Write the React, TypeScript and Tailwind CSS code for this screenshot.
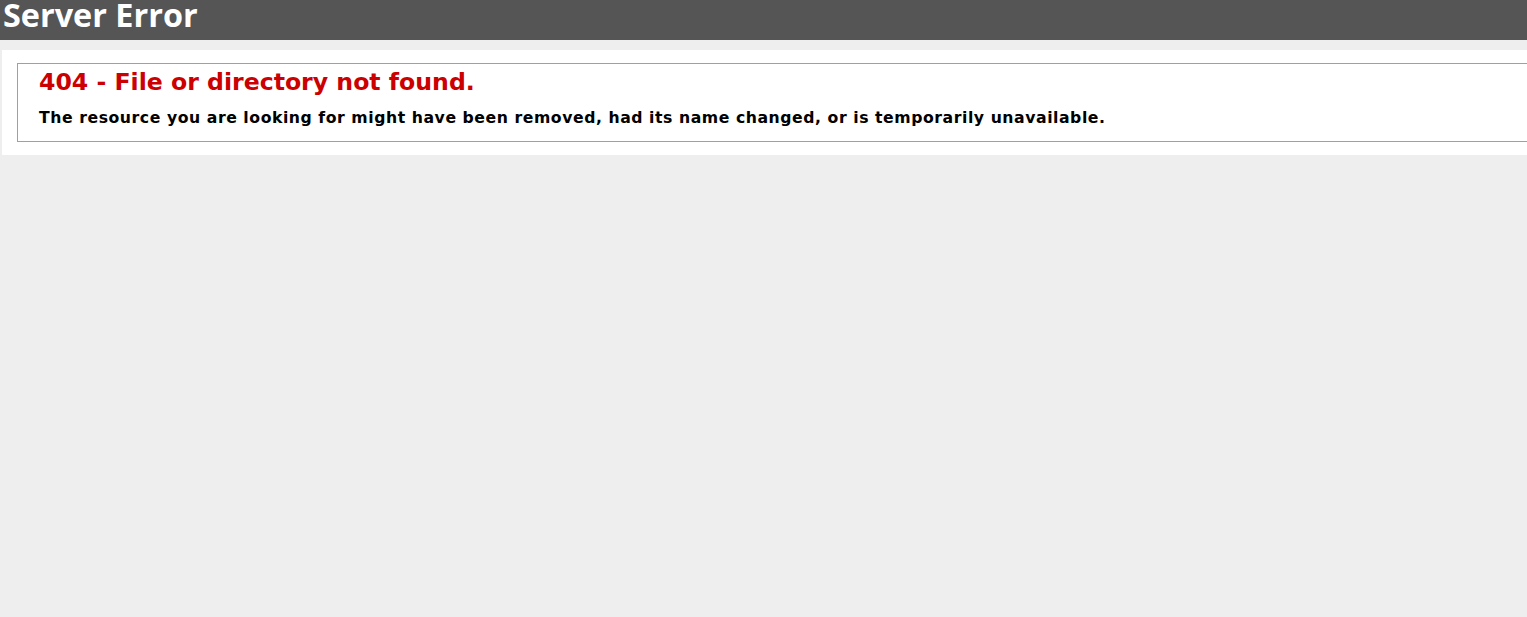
export default function App() {
  return (
    <div className="min-h-screen w-full overflow-hidden bg-[#eeeeee] font-['DejaVu_Sans',Verdana,sans-serif]">
      {/* Header bar */}
      <div className="h-[40px] overflow-hidden bg-[#555555] pl-[3px]">
        <h1 className="-mt-[6px] whitespace-nowrap font-['Open_Sans',sans-serif] text-[32.4px] font-bold leading-[40px] text-white">
          Server Error
        </h1>
      </div>

      {/* Content */}
      <div className="mt-[10px] ml-[2px] w-[1560px] bg-white px-[15px] py-[13px]">
        <fieldset className="border border-[#a0a0a0] px-[21px] pt-[3px] pb-[13px]">
          <h2 className="whitespace-nowrap text-[23.6px] font-bold leading-[30px] text-[#cc0000]">
            404 - File or directory not found.
          </h2>
          <h3 className="mt-[11px] whitespace-nowrap text-[15.7px] font-bold leading-[20px] tracking-[0.55px] text-black">
            The resource you are looking for might have been removed, had its name changed, or is temporarily unavailable.
          </h3>
        </fieldset>
      </div>
    </div>
  );
}
